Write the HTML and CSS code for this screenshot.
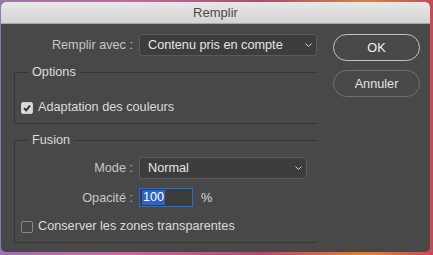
FILE: index.html
```html
<!DOCTYPE html>
<html lang="fr">
<head>
    <meta charset="UTF-8">
    <title>Remplir</title>
    <link rel="stylesheet" href="styles.css">
</head>
<body>
    <div class="window">
        <div class="titlebar">Remplir</div>
        <div class="content">
            <div class="main">
                <div class="row top-row">
                    <span class="label">Remplir avec :</span>
                    <div class="select wide">
                        <span>Contenu pris en compte</span>
                        <svg class="chevron" width="7" height="4" viewBox="0 0 7 4"><path d="M0.5 0.5 L3.5 3.5 L6.5 0.5" fill="none" stroke="#cfcfcf" stroke-width="1"/></svg>
                    </div>
                </div>

                <div class="group options">
                    <div class="group-title">Options</div>
                    <div class="check">
                        <span class="box checked">
                            <svg width="10" height="10" viewBox="0 0 10 10"><path d="M2 5.2 L4.2 7.4 L8 2.6" fill="none" stroke="#2a2a2a" stroke-width="1.8"/></svg>
                        </span>
                        <span>Adaptation des couleurs</span>
                    </div>
                </div>

                <div class="group fusion">
                    <div class="group-title">Fusion</div>
                    <div class="row mode-row">
                        <span class="label">Mode :</span>
                        <div class="select">
                            <span>Normal</span>
                            <svg class="chevron" width="7" height="4" viewBox="0 0 7 4"><path d="M0.5 0.5 L3.5 3.5 L6.5 0.5" fill="none" stroke="#cfcfcf" stroke-width="1"/></svg>
                        </div>
                    </div>
                    <div class="row opacity-row">
                        <span class="label">Opacité :</span>
                        <div class="input"><span class="selected">100</span></div>
                        <span class="unit">%</span>
                    </div>
                    <div class="check last">
                        <span class="box"></span>
                        <span>Conserver les zones transparentes</span>
                    </div>
                </div>
            </div>

            <div class="buttons">
                <button class="btn default">OK</button>
                <button class="btn">Annuler</button>
            </div>
        </div>
    </div>
</body>
</html>
```

FILE: styles.css
```css
body {
    margin: 0;
    padding: 2px 3px 3px 1px;
    height: 250px;
    font-family: "Liberation Sans", Arial, sans-serif;
    font-size: 12.7px;
    background: linear-gradient(90deg, #9d74b0 0%, #c46a9a 30%, #b04a70 60%, #d8843a 85%, #c44a5a 100%);
}

.window {
    height: 250px;
    border-radius: 5px;
    overflow: hidden;
    background: #484848;
}

.titlebar {
    height: 21px;
    line-height: 22px;
    text-align: center;
    color: #4a4a4a;
    font-size: 13px;
    background: linear-gradient(#e8e8e8, #d4d4d4);
    border-bottom: 1px solid #a8a8a8;
}

.content {
    display: flex;
    padding: 10px 10px 0 13px;
}

.main {
    width: 303px;
}

.row {
    display: flex;
    align-items: center;
}

.label {
    width: 119px;
    margin-right: 6px;
    text-align: right;
    color: #c6c6c6;
}

.group .label {
    width: 118px;
}

.select {
    display: flex;
    align-items: center;
    justify-content: space-between;
    box-sizing: border-box;
    width: 168px;
    height: 22px;
    padding: 0 4px 0 8px;
    color: #e6e6e6;
    background: #3d3d3d;
    border: 1px solid #5a5a5a;
    border-radius: 3px;
}

.select.wide {
    width: 178px;
}

.group {
    border: 1px solid #363636;
    border-right: none;
}

.group-title {
    width: fit-content;
    margin: -8px 0 0 13px;
    padding: 0 4px;
    line-height: 15px;
    color: #dcdcdc;
    background: #484848;
}

.options {
    margin-top: 16px;
    padding-bottom: 8px;
}

.fusion {
    margin-top: 16px;
    padding-bottom: 8px;
}

.check {
    display: flex;
    align-items: center;
    line-height: 15px;
    margin-left: 6px;
    color: #dcdcdc;
}

.options .check {
    margin-top: 20px;
}

.check.last {
    margin-top: 12px;
}

.box {
    display: flex;
    align-items: center;
    justify-content: center;
    box-sizing: border-box;
    width: 12px;
    height: 12px;
    margin-right: 5px;
    border: 1px solid #8a8a8a;
    border-radius: 2px;
    background: #474747;
}

.box.checked {
    border-color: #cfcfcf;
    background: #d9d9d9;
}

.mode-row {
    margin-top: 9px;
}

.opacity-row {
    margin-top: 9px;
}

.input {
    box-sizing: border-box;
    width: 54px;
    height: 19px;
    padding: 1px 0 0 2px;
    line-height: 15px;
    background: #3b3b3b;
    border: 1px solid #1f6fdc;
    color: #ffffff;
}

.selected {
    display: inline-block;
    padding: 0 1px;
    background: #2b63c9;
}

.unit {
    margin-left: 8px;
    color: #dcdcdc;
}

.buttons {
    display: flex;
    flex-direction: column;
    gap: 9px;
    margin-left: 16px;
}

.btn {
    width: 87px;
    height: 27px;
    padding: 0;
    font-family: inherit;
    font-size: 12.7px;
    color: #e4e4e4;
    background: #484848;
    border: 1px solid #707070;
    border-radius: 14px;
}

.btn.default {
    border-color: #c4c4c4;
    color: #f0f0f0;
}
```
